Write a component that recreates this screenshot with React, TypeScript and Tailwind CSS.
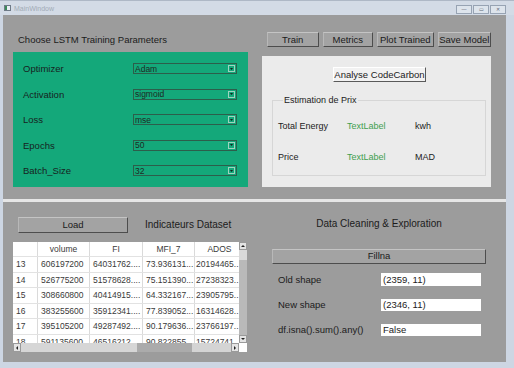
const rows = [
  ["13", "606197200", "64031762....", "73.936131...", "20194465.."],
  ["14", "526775200", "51578628....", "75.151390...", "27238323.."],
  ["15", "308660800", "40414915....", "64.332167...", "23905795.."],
  ["16", "383255600", "35912341....", "77.839052...", "16314628.."],
  ["17", "395105200", "49287492....", "90.179636...", "23766197.."],
  ["18", "591135600", "46516212....", "90.822855...", "15724741.."],
];

const params = [
  ["Optimizer", "Adam"],
  ["Activation", "sigmoid"],
  ["Loss", "mse"],
  ["Epochs", "50"],
  ["Batch_Size", "32"],
];

function GrayButton({ label, className }: { label: string; className: string }) {
  return (
    <div
      className={[
        "flex items-center justify-center whitespace-nowrap text-[9.5px] leading-none text-[#1a1a1a]",
        "bg-[#a3a3a3] border border-t-[#c4c4c4] border-l-[#b8b8b8] border-r-[#4d4d4d] border-b-[#4d4d4d]",
        className,
      ].join(" ")}
    >
      {label}
    </div>
  );
}

function Combo({ value }: { value: string }) {
  return (
    <div className="w-[104px] h-[11px] border border-[#2c5e4b] flex items-center justify-between pl-[1px] pr-[1px]">
      <span className="text-[8.5px] leading-none text-[#1d2a24]">{value}</span>
      <span className="w-[7px] h-[7px] border border-[#9fd3bf] flex items-center justify-center">
        <svg width="3" height="2" viewBox="0 0 3 2">
          <path d="M0 0h3L1.5 2z" fill="#10241c" />
        </svg>
      </span>
    </div>
  );
}

function TitleBar() {
  return (
    <div className="h-[15px] flex items-center bg-[#d3dbe6] border-t border-[#aeb8c6] pl-[4px] pr-[8px]">
      <div className="w-[7px] h-[6px] border border-[#6e7a87] bg-[#e9eef4] flex">
        <div className="w-[2px] bg-[#3c8a5a]" />
      </div>
      <span className="ml-[3px] text-[7px] leading-none text-[#a2abb6]">MainWindow</span>
      <div className="ml-auto flex gap-[1px] mt-[2px]">
        {["—", "▭", "✕"].map((g) => (
          <div
            key={g}
            className="w-[16px] h-[9px] border border-[#97a3b3] bg-[#dde4ec] flex items-center justify-center text-[5px] leading-none text-[#5d6875]"
          >
            {g}
          </div>
        ))}
      </div>
    </div>
  );
}

function TopSection() {
  return (
    <div className="h-[184px] flex pl-[10px] pt-[17px]">
      {/* left: LSTM params */}
      <div className="w-[235px] flex flex-col">
        <div className="h-[15px] flex items-center pl-[5px] text-[9.5px] leading-none">
          Choose LSTM Training Parameters
        </div>
        <div className="mt-[5px] h-[135px] bg-[#14a87a] pt-[4px] pl-[10px] flex flex-col">
          {params.map(([label, value]) => (
            <div key={label} className="h-[25.5px] flex items-center">
              <span className="w-[110px] text-[9.5px] leading-none text-[#17231e]">{label}</span>
              <Combo value={value} />
            </div>
          ))}
        </div>
      </div>

      {/* right: actions + codecarbon */}
      <div className="ml-[14px] w-[229px] flex flex-col">
        <div className="h-[15px] flex gap-[4px] pl-[5px]">
          <GrayButton label="Train" className="w-[52px]" />
          <GrayButton label="Metrics" className="w-[51px]" />
          <GrayButton label="Plot Trained" className="w-[57px]" />
          <GrayButton label="Save Model" className="w-[54px]" />
        </div>
        <div className="mt-[9px] h-[131px] bg-[#ebebeb] flex flex-col">
          <div className="ml-[71px] mt-[11px] w-[93px] h-[15px] flex items-center justify-center whitespace-nowrap text-[9.5px] leading-none bg-[#f2f2f2] border border-t-[#ffffff] border-l-[#ffffff] border-r-[#5a5a5a] border-b-[#5a5a5a]">
            Analyse CodeCarbon
          </div>
          <fieldset className="ml-[10px] mt-[13px] w-[214px] h-[81px] border border-[#d6d6d6] pl-[5px] pr-0 pb-0 pt-0 m-0">
            <legend className="ml-[5px] px-[1px] text-[9px] leading-[11px] text-[#222]">Estimation de Prix</legend>
            <div className="mt-[12px] h-[16px] flex items-center text-[9px] leading-none">
              <span className="w-[69px] text-[#222]">Total Energy</span>
              <span className="w-[68px] text-[#3fa04f]">TextLabel</span>
              <span className="text-[#222]">kwh</span>
            </div>
            <div className="mt-[15.5px] h-[16px] flex items-center text-[9px] leading-none">
              <span className="w-[69px] text-[#222]">Price</span>
              <span className="w-[68px] text-[#3fa04f]">TextLabel</span>
              <span className="text-[#222]">MAD</span>
            </div>
          </fieldset>
        </div>
      </div>
    </div>
  );
}

function DataTable() {
  const widths = ["w-[24px]", "w-[52px]", "w-[53px]", "w-[52px]", "w-[50px]"];
  return (
    <div className="mt-[9.5px] w-[234px] h-[110px] bg-white flex flex-col text-[8.5px] leading-none text-[#3a3a3a]">
      <div className="flex-1 flex min-h-0">
        <div className="flex-1 overflow-hidden flex flex-col">
          <div className="h-[14px] flex shrink-0">
            {["", "volume", "FI", "MFI_7", "ADOS"].map((h, i) => (
              <div
                key={i}
                className={[
                  widths[i],
                  "shrink-0 flex items-center justify-center",
                  i > 0 ? "border-l border-[#dadada]" : "",
                ].join(" ")}
              >
                {h}
              </div>
            ))}
          </div>
          {rows.map((r) => (
            <div key={r[0]} className="h-[15.6px] flex shrink-0 border-t border-[#e2e2e2]">
              {r.map((c, i) => (
                <div
                  key={i}
                  className={[
                    widths[i],
                    "shrink-0 flex items-center whitespace-nowrap overflow-hidden",
                    i === 0 ? "pl-[3px]" : i === 4 ? "pl-[1px] border-l border-[#dadada]" : "pl-[3px] border-l border-[#dadada]",
                  ].join(" ")}
                >
                  {c}
                </div>
              ))}
            </div>
          ))}
        </div>
        {/* vertical scrollbar */}
        <div className="w-[8px] flex flex-col bg-[#b9b9b9]">
          <div className="h-[8px] bg-[#e4e4e4] border border-[#9a9a9a] flex items-center justify-center">
            <svg width="4" height="2" viewBox="0 0 4 2"><path d="M0 2h4L2 0z" fill="#222" /></svg>
          </div>
          <div className="h-[10px] bg-[#d9d9d9]" />
          <div className="flex-1" />
          <div className="h-[8px] bg-[#e4e4e4] border border-[#9a9a9a] flex items-center justify-center">
            <svg width="4" height="2" viewBox="0 0 4 2"><path d="M0 0h4L2 2z" fill="#222" /></svg>
          </div>
        </div>
      </div>
      {/* horizontal scrollbar */}
      <div className="h-[9px] flex">
        <div className="flex-1 flex bg-[#cfcfcf]">
          <div className="w-[8px] bg-[#e4e4e4] border border-[#9a9a9a] flex items-center justify-center">
            <svg width="2" height="4" viewBox="0 0 2 4"><path d="M2 0v4L0 2z" fill="#222" /></svg>
          </div>
          <div className="w-[116px] bg-[#d6d6d6]" />
          <div className="w-[55px] bg-[#ababab]" />
          <div className="flex-1 bg-[#d4d4d4]" />
          <div className="w-[8px] bg-[#e4e4e4] border border-[#9a9a9a] flex items-center justify-center">
            <svg width="2" height="4" viewBox="0 0 2 4"><path d="M0 0v4L2 2z" fill="#222" /></svg>
          </div>
        </div>
        <div className="w-[8px] bg-white" />
      </div>
    </div>
  );
}

function BottomSection() {
  const shapes = [
    ["Old shape", "(2359, 11)"],
    ["New shape", "(2346, 11)"],
    ["df.isna().sum().any()", "False"],
  ];
  return (
    <div className="h-[160px] flex pl-[10px] pt-[14.5px]">
      <div className="w-[235px] flex flex-col">
        <div className="h-[16px] flex items-center">
          <GrayButton label="Load" className="ml-[5px] w-[110px] h-[16px]" />
          <span className="ml-[17px] text-[10px] leading-none">Indicateurs Dataset</span>
        </div>
        <DataTable />
      </div>

      <div className="ml-[24px] w-[214px] flex flex-col">
        <div className="h-[16px] -mt-[1px] flex items-center justify-center text-[10px] leading-none">
          Data Cleaning &amp; Exploration
        </div>
        <GrayButton label="Fillna" className="mt-[17px] h-[15px] w-full" />
        <div className="mt-[3.5px] flex flex-col">
          {shapes.map(([label, value]) => (
            <div key={label} className="h-[25.3px] flex items-center">
              <span className="ml-[6px] w-[103px] text-[9.5px] leading-none text-[#1b1b1b]">{label}</span>
              <div className="w-[100px] h-[12.5px] bg-white flex items-center pl-[2px] text-[9.5px] leading-none text-[#1b1b1b]">
                {value}
              </div>
            </div>
          ))}
        </div>
      </div>
    </div>
  );
}

export default function App() {
  return (
    <div className="w-[514px] h-[368px] bg-[#cdd6e3] flex flex-col font-['Liberation_Sans',Arial,sans-serif] text-[#1b1b1b] overflow-hidden">
      <TitleBar />
      <div className="flex-1 ml-[3px] mr-[8px] bg-[#9c9c9c] flex flex-col">
        <TopSection />
        <div className="h-[3px] bg-[#e6e6e6]" />
        <BottomSection />
      </div>
      <div className="h-[6px]" />
    </div>
  );
}
